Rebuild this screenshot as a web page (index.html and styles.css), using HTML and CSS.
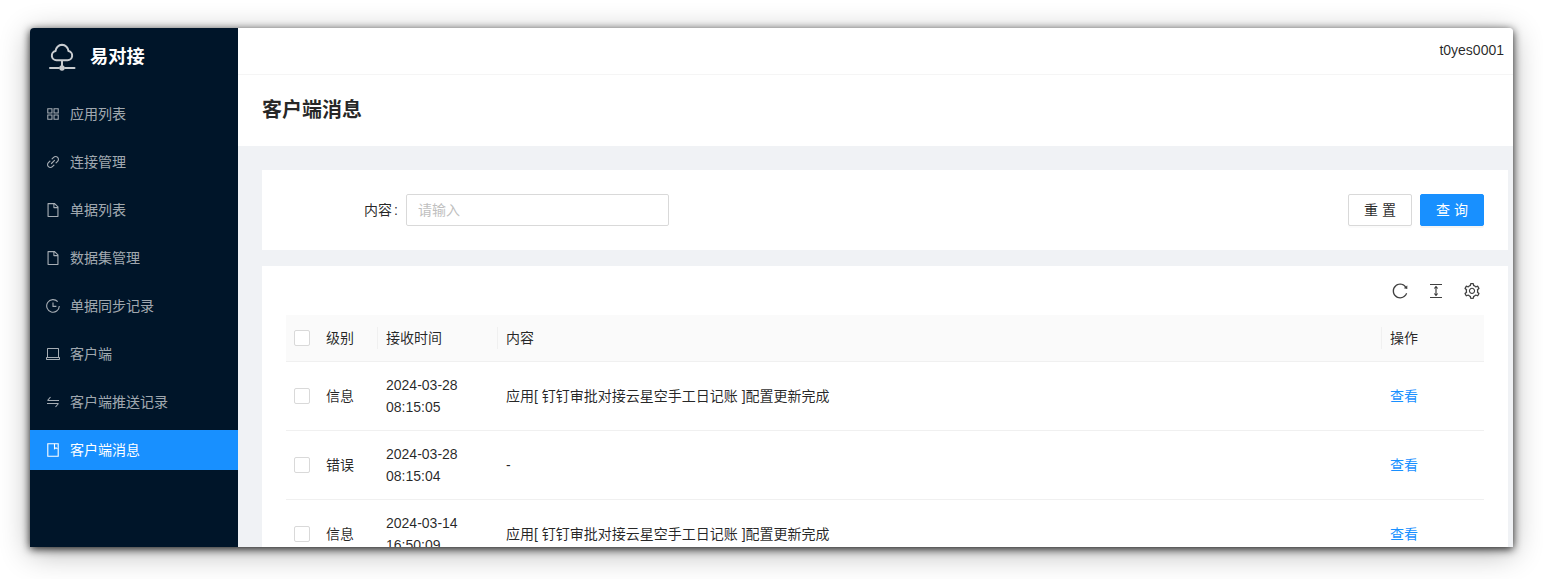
FILE: index.html
```html
<!DOCTYPE html>
<html lang="zh-CN">
<head>
<meta charset="utf-8">
<title>客户端消息</title>
<link rel="stylesheet" href="styles.css">
</head>
<body>
<div class="window">
  <aside class="sider">
    <div class="logo">
      <svg class="logo-icon" viewBox="0 0 27 28" fill="none" stroke="currentColor" stroke-width="2" stroke-linecap="round" stroke-linejoin="round"><path d="M13 17.200H7.500a4.600 4.600 0 0 1-1-9.100A6.800 6.800 0 0 1 13 1.800a6.800 6.800 0 0 1 6.500 6.300 4.600 4.600 0 0 1-1 9.100H13v7.800"/><path d="M1 25h9M16 25h9.500"/><circle cx="13" cy="25" r="2.700" fill="currentColor" stroke="none"/></svg>
      <span class="logo-text">易对接</span>
    </div>
    <nav class="menu">
      <a class="menu-item"><svg class="menu-icon" viewBox="64 64 896 896" fill="currentColor"><path d="M464 144H160c-8.800 0-16 7.200-16 16v304c0 8.800 7.200 16 16 16h304c8.800 0 16-7.200 16-16V160c0-8.800-7.200-16-16-16zm-52 268H212V212h200v200zm452-268H560c-8.800 0-16 7.200-16 16v304c0 8.800 7.200 16 16 16h304c8.800 0 16-7.200 16-16V160c0-8.800-7.200-16-16-16zm-52 268H612V212h200v200zM464 544H160c-8.800 0-16 7.200-16 16v304c0 8.800 7.200 16 16 16h304c8.800 0 16-7.200 16-16V560c0-8.800-7.200-16-16-16zm-52 268H212V612h200v200zm452-268H560c-8.800 0-16 7.200-16 16v304c0 8.800 7.200 16 16 16h304c8.800 0 16-7.200 16-16V560c0-8.800-7.200-16-16-16zm-52 268H612V612h200v200z"/></svg><span>应用列表</span></a>
      <a class="menu-item"><svg class="menu-icon" viewBox="64 64 896 896" fill="currentColor"><path d="M574 665.400a8.030 8.030 0 00-11.300 0L446.500 781.600c-53.800 53.800-144.600 59.500-204 0-59.500-59.500-53.800-150.200 0-204l116.200-116.200c3.100-3.100 3.100-8.200 0-11.300l-39.800-39.800a8.030 8.030 0 00-11.300 0L191.400 526.500c-84.600 84.600-84.600 221.500 0 306s221.500 84.600 306 0l116.200-116.200c3.100-3.100 3.100-8.200 0-11.300L574 665.400zm258.600-474c-84.600-84.600-221.500-84.600-306 0L410.300 307.600a8.030 8.030 0 000 11.300l39.700 39.700c3.100 3.100 8.200 3.100 11.300 0l116.200-116.200c53.800-53.800 144.600-59.500 204 0 59.500 59.500 53.800 150.200 0 204L665.300 562.600a8.030 8.030 0 000 11.300l39.800 39.800c3.100 3.100 8.200 3.100 11.300 0l116.200-116.200c84.500-84.600 84.500-221.500 0-306.100zM610.100 372.300a8.030 8.030 0 00-11.300 0L372.300 598.700a8.030 8.030 0 000 11.300l39.600 39.600c3.100 3.100 8.200 3.100 11.300 0l226.400-226.400c3.100-3.100 3.100-8.200 0-11.300l-39.500-39.600z"/></svg><span>连接管理</span></a>
      <a class="menu-item"><svg class="menu-icon" viewBox="64 64 896 896" fill="currentColor"><path d="M854.600 288.600L639.400 73.400c-6-6-14.100-9.400-22.600-9.400H192c-17.700 0-32 14.300-32 32v832c0 17.700 14.300 32 32 32h640c17.700 0 32-14.300 32-32V311.300c0-8.500-3.400-16.700-9.400-22.700zM790.200 326H602V137.800L790.200 326zm1.800 562H232V136h302v216a42 42 0 0042 42h216v494z"/></svg><span>单据列表</span></a>
      <a class="menu-item"><svg class="menu-icon" viewBox="64 64 896 896" fill="currentColor"><path d="M854.600 288.600L639.400 73.400c-6-6-14.100-9.400-22.600-9.400H192c-17.700 0-32 14.300-32 32v832c0 17.700 14.300 32 32 32h640c17.700 0 32-14.300 32-32V311.300c0-8.500-3.400-16.700-9.400-22.700zM790.200 326H602V137.800L790.200 326zm1.800 562H232V136h302v216a42 42 0 0042 42h216v494z"/></svg><span>数据集管理</span></a>
      <a class="menu-item"><svg class="menu-icon" viewBox="0 0 14 14" fill="none" stroke="currentColor" stroke-width="1.100"><path d="M11.700 2.700A6.300 6.300 0 1 0 13.300 7"/><path d="M7 3.500V7.400H10.400"/></svg><span>单据同步记录</span></a>
      <a class="menu-item"><svg class="menu-icon" viewBox="0 0 14 14" fill="none" stroke="currentColor" stroke-width="1"><path d="M1.500 10V1.500h11V10"/><path d="M.5 10.500h13v2h-13z"/></svg><span>客户端</span></a>
      <a class="menu-item"><svg class="menu-icon" viewBox="0 0 14 14" fill="none" stroke="currentColor" stroke-width="1.100"><path d="M1.500 5.500h11.500M1.500 5.500 4.500 2"/><path d="M1 8.500h11.500M12.500 8.500l-3 3.500"/></svg><span>客户端推送记录</span></a>
      <a class="menu-item active"><svg class="menu-icon" viewBox="0 0 14 14" fill="none" stroke="currentColor" stroke-width="1.100"><path d="M1.800.8h10.400v12.400H1.800z"/><path d="M8.500.8v5l1.500-1 1.500 1"/></svg><span>客户端消息</span></a>
    </nav>
  </aside>
  <div class="main">
    <header class="topbar">t0yes0001</header>
    <div class="page-head"><h1 class="page-title">客户端消息</h1></div>
    <div class="content">
      <section class="card filter">
        <div class="field">
          <label class="field-label">内容</label>
          <input class="field-input" type="text" placeholder="请输入">
        </div>
        <div class="actions">
          <button class="btn">重 置</button>
          <button class="btn primary">查 询</button>
        </div>
      </section>
      <section class="card list">
        <div class="toolbar">
          <svg class="tool" viewBox="64 64 896 896" fill="currentColor"><path d="M909.100 209.300l-56.400 44.100C775.800 155.100 656.200 92 521.900 92 290 92 102.300 279.500 102 511.500 101.700 743.700 289.800 932 521.900 932c181.300 0 335.800-115 394.600-276.100 1.500-4.200-.7-8.900-4.900-10.300l-56.700-19.500a8 8 0 00-10.100 4.800c-1.800 5-3.800 10-5.900 14.900-17.300 41-42.100 77.800-73.700 109.400A344.770 344.770 0 01655.900 829c-42.300 17.900-87.400 27-133.800 27-46.500 0-91.500-9.100-133.800-27A341.500 341.500 0 01279 755.200a342.160 342.160 0 01-73.700-109.400c-17.900-42.400-27-87.400-27-133.900s9.100-91.500 27-133.900c17.300-41 42.100-77.800 73.700-109.400 31.600-31.600 68.400-56.400 109.300-73.800 42.300-17.900 87.400-27 133.800-27 46.500 0 91.500 9.100 133.800 27a341.500 341.500 0 01109.300 73.800c9.900 9.900 19.200 20.400 27.800 31.400l-60.200 47a8 8 0 003 14.100l175.600 43c5 1.200 9.900-2.600 9.900-7.700l.8-180.900c-.1-6.600-7.800-10.300-13-6.200z"/></svg>
          <svg class="tool" viewBox="0 0 16 16" fill="none" stroke="currentColor" stroke-width="1.200"><path d="M2 1.500h12M2 14.500h12M8 3.800v8.400"/><path d="M6.300 5.500 8 3.500 9.700 5.500M6.300 10.500 8 12.500 9.700 10.500" stroke-width="1.100"/></svg>
          <svg class="tool" viewBox="64 64 896 896" fill="currentColor"><path d="M924.800 625.700l-65.500-56c3.100-19 4.700-38.400 4.700-57.800s-1.600-38.800-4.700-57.800l65.500-56a32.030 32.030 0 009.300-35.200l-.9-2.600a443.740 443.740 0 00-79.700-137.900l-1.800-2.100a32.120 32.120 0 00-35.100-9.500l-81.300 28.900c-30-24.600-63.500-44-99.700-57.600l-15.700-85a32.050 32.050 0 00-25.800-25.700l-2.700-.5c-52.100-9.400-106.900-9.400-159 0l-2.700.5a32.050 32.050 0 00-25.800 25.700l-15.800 85.400a351.860 351.860 0 00-99 57.400l-81.900-29.100a32 32 0 00-35.100 9.500l-1.800 2.100a446.020 446.020 0 00-79.700 137.900l-.9 2.600c-4.500 12.500-.8 26.500 9.300 35.200l66.300 56.600c-3.100 18.800-4.600 38-4.600 57.100 0 19.200 1.500 38.400 4.600 57.100L99 625.500a32.030 32.030 0 00-9.300 35.200l.9 2.600c18.100 50.400 44.900 96.900 79.700 137.900l1.800 2.100a32.120 32.120 0 0035.100 9.500l81.900-29.100c29.800 24.500 63.100 43.900 99 57.400l15.800 85.400a32.050 32.050 0 0025.800 25.700l2.700.5a449.400 449.400 0 00159 0l2.700-.5a32.050 32.050 0 0025.800-25.700l15.700-85a350 350 0 0099.700-57.600l81.300 28.900a32 32 0 0035.100-9.500l1.800-2.100c34.800-41.100 61.600-87.500 79.700-137.900l.9-2.600c4.500-12.300.8-26.300-9.300-35zM788.300 465.900c2.500 15.100 3.800 30.600 3.800 46.100s-1.300 31-3.800 46.100l-6.600 40.100 74.700 63.900a370.030 370.030 0 01-42.600 73.600L721 702.800l-31.400 25.800c-23.900 19.600-50.500 35-79.300 45.800l-38.100 14.300-17.900 97a377.500 377.500 0 01-85 0l-17.900-97.200-37.800-14.500c-28.500-10.800-55-26.200-78.700-45.700l-31.400-25.900-93.400 33.200c-17-22.900-31.200-47.600-42.600-73.600l75.500-64.500-6.500-40c-2.400-14.900-3.700-30.300-3.700-45.500 0-15.300 1.200-30.600 3.700-45.500l6.500-40-75.500-64.500c11.300-26.100 25.600-50.700 42.600-73.600l93.400 33.200 31.400-25.900c23.700-19.500 50.200-34.900 78.700-45.700l37.900-14.300 17.900-97.200c28.100-3.200 56.800-3.200 85 0l17.900 97 38.100 14.300c28.700 10.800 55.400 26.200 79.300 45.800l31.400 25.800 92.800-32.900c17 22.900 31.200 47.600 42.600 73.600L781.800 426l6.500 39.900zM512 326c-97.200 0-176 78.800-176 176s78.800 176 176 176 176-78.800 176-176-78.800-176-176-176zm79.200 255.200A111.600 111.600 0 01512 614c-29.900 0-58-11.700-79.200-32.800A111.600 111.600 0 01400 502c0-29.900 11.700-58 32.800-79.200C454 401.600 482.100 390 512 390c29.900 0 58 11.600 79.200 32.800A111.600 111.600 0 01624 502c0 29.900-11.700 58-32.800 79.200z"/></svg>
        </div>
        <table class="table">
          <colgroup>
            <col class="c-check"><col class="c-level"><col class="c-time"><col><col class="c-op">
          </colgroup>
          <thead>
            <tr>
              <th class="check"><span class="checkbox"></span></th>
              <th><span class="th-text">级别</span></th>
              <th class="sep"><span class="th-text">接收时间</span></th>
              <th class="sep"><span class="th-text">内容</span></th>
              <th class="sep"><span class="th-text">操作</span></th>
            </tr>
          </thead>
          <tbody>
            <tr>
              <td class="check"><span class="checkbox"></span></td>
              <td>信息</td>
              <td>2024-03-28<br>08:15:05</td>
              <td>应用[ 钉钉审批对接云星空手工日记账 ]配置更新完成</td>
              <td><a class="link">查看</a></td>
            </tr>
            <tr>
              <td class="check"><span class="checkbox"></span></td>
              <td>错误</td>
              <td>2024-03-28<br>08:15:04</td>
              <td>-</td>
              <td><a class="link">查看</a></td>
            </tr>
            <tr>
              <td class="check"><span class="checkbox"></span></td>
              <td>信息</td>
              <td>2024-03-14<br>16:50:09</td>
              <td>应用[ 钉钉审批对接云星空手工日记账 ]配置更新完成</td>
              <td><a class="link">查看</a></td>
            </tr>
          </tbody>
        </table>
      </section>
    </div>
  </div>
</div>
</body>
</html>
```
FILE: styles.css
```css
* { box-sizing: border-box; }
html, body { margin: 0; height: 100%; overflow: hidden; background: #fff; }
body {
  padding: 28px 30px 32px;
  font-family: "Liberation Sans", "Noto Sans CJK SC", sans-serif;
  font-size: 14px;
  line-height: 22px;
  color: rgba(0, 0, 0, .85);
}
.window {
  display: flex;
  height: 519px;
  overflow: hidden;
  border-radius: 4px 4px 0 0;
  background: #f0f2f5;
  box-shadow: 0 2px 8px rgba(0, 0, 0, .85), 0 6px 30px rgba(0, 0, 0, .3);
}
.sider { flex: 0 0 208px; background: #001529; }
.logo {
  display: flex;
  align-items: center;
  gap: 14px;
  height: 58px;
  padding-left: 19px;
  color: #fff;
}
.logo-icon { width: 27px; height: 28px; color: #c8ccd0; }
.logo-text { font-size: 18.200px; font-weight: 700; line-height: 26px; }
.menu { display: flex; flex-direction: column; gap: 8px; margin-top: 8px; }
.menu-item {
  display: flex;
  align-items: center;
  gap: 10px;
  height: 40px;
  padding-left: 16px;
  color: rgba(255, 255, 255, .65);
}
.menu-item.active { background: #1890ff; color: #fff; }
.menu-icon { flex: none; width: 14px; height: 14px; }
.main { flex: 1; min-width: 0; display: flex; flex-direction: column; }
.topbar {
  flex: none;
  height: 47px;
  padding: 11px 9px 0 0;
  text-align: right;
  background: #fff;
  border-bottom: 1px solid #f5f5f5;
}
.page-head { flex: none; height: 71px; padding: 0 24px 1px; display: flex; align-items: center; background: #fff; }
.page-title { margin: 0; font-size: 20px; font-weight: 600; line-height: 28px; }
.content { flex: 1; padding: 24px 5px 0 24px; }
.card { background: #fff; }
.filter {
  display: flex;
  align-items: center;
  justify-content: space-between;
  height: 80px;
  padding: 0 24px;
  margin-bottom: 16px;
}
.field { display: flex; align-items: center; }
.field-label { width: 120px; text-align: right; white-space: nowrap; }
.field-label::after { content: ":"; margin: 0 8px 0 2px; }
.field-input {
  width: 263px;
  height: 32px;
  padding: 4px 11px;
  font: inherit;
  border: 1px solid #d9d9d9;
  border-radius: 2px;
  outline: none;
}
.field-input::placeholder { color: #bfbfbf; }
.actions { display: flex; gap: 8px; }
.btn {
  width: 64px;
  height: 32px;
  padding: 0;
  font: inherit;
  color: rgba(0, 0, 0, .85);
  background: #fff;
  border: 1px solid #d9d9d9;
  border-radius: 2px;
  box-shadow: 0 2px 0 rgba(0, 0, 0, .015);
}
.btn.primary { color: #fff; background: #1890ff; border-color: #1890ff; box-shadow: 0 2px 0 rgba(0, 0, 0, .045); }
.list { padding: 0 24px; }
.toolbar { display: flex; justify-content: flex-end; align-items: center; gap: 20px; height: 49px; padding: 1px 4px 0 0; }
.tool { width: 16px; height: 16px; color: rgba(0, 0, 0, .75); }
.table { width: 100%; border-collapse: collapse; table-layout: fixed; }
.c-check { width: 32px; }
.c-level { width: 60px; }
.c-time { width: 120px; }
.c-op { width: 102px; }
th, td { padding: 8px; text-align: left; border-bottom: 1px solid #f0f0f0; font-weight: 400; }
th { height: 46px; background: #fafafa; position: relative; }
td { height: 69px; padding-top: 12px; padding-bottom: 11px; }
th.sep::before {
  content: "";
  position: absolute;
  left: -1px;
  top: 12px;
  height: 22px;
  width: 1px;
  background: #f0f0f0;
}
.check { font-size: 0; line-height: 0; }
.checkbox { display: inline-block; width: 16px; height: 16px; background: #fff; border: 1px solid #d9d9d9; border-radius: 2px; }
.link { color: #1890ff; }
```
